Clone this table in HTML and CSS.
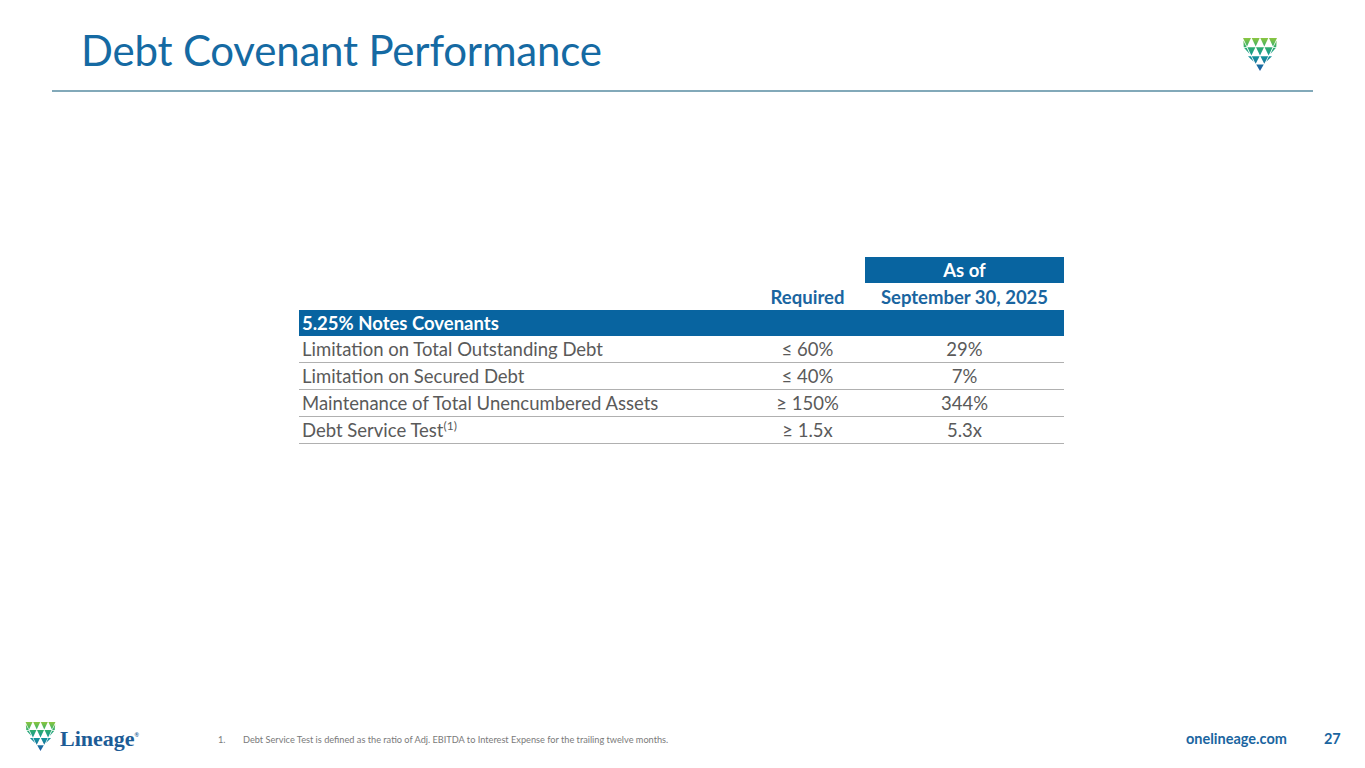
FILE: index.html
```html
<!DOCTYPE html>
<html lang="en">
<head>
<meta charset="utf-8">
<title>Debt Covenant Performance</title>
<link rel="stylesheet" href="styles.css">
</head>
<body>
<div class="page">
  <header class="header">
    <h1 class="title">Debt Covenant Performance</h1>
    <svg class="logo-top" width="34" height="33" viewBox="0 0 34 33" aria-hidden="true">
      <defs>
        <linearGradient id="lg1" gradientUnits="userSpaceOnUse" x1="0" y1="0" x2="0" y2="33">
          <stop offset="0" stop-color="#8cc63f"/>
          <stop offset="0.28" stop-color="#2fae6e"/>
          <stop offset="0.55" stop-color="#12939a"/>
          <stop offset="1" stop-color="#1f58a5"/>
        </linearGradient>
      </defs>
      <g fill="url(#lg1)">
        <polygon points="0,0 8,0 4,8.5"/>
        <polygon points="8.7,0 16.7,0 12.7,8.5"/>
        <polygon points="17.3,0 25.3,0 21.3,8.5"/>
        <polygon points="26,0 34,0 30,8.5"/>
        <polygon points="0.3,2.5 3.7,9.2 0.8,9.2"/>
        <polygon points="33.7,2.5 30.3,9.2 33.2,9.2"/>
        <polygon points="4.4,9.2 12.4,9.2 8.4,17.5"/>
        <polygon points="13,9.2 21,9.2 17,17.5"/>
        <polygon points="21.6,9.2 29.6,9.2 25.6,17.5"/>
        <polygon points="1.2,10 3.8,10 6.6,16"/>
        <polygon points="32.8,10 30.2,10 27.4,16"/>
        <polygon points="8.8,18.2 16.6,18.2 12.7,25.8"/>
        <polygon points="17.4,18.2 25.2,18.2 21.3,25.8"/>
        <polygon points="5,18.2 8,18.2 10.7,23.8"/>
        <polygon points="29,18.2 26,18.2 23.3,23.8"/>
        <polygon points="13.2,26.5 20.8,26.5 17,33"/>
      </g>
    </svg>
  </header>
  <div class="rule"></div>
  <main class="main">
    <table class="cov">
      <colgroup>
        <col class="c1"><col class="c2"><col class="c3">
      </colgroup>
      <tr class="r-asof">
        <td></td><td></td><td class="asof">As of</td>
      </tr>
      <tr class="r-head">
        <td></td><td class="hd">Required</td><td class="hd">September 30, 2025</td>
      </tr>
      <tr class="r-band">
        <td colspan="3">5.25% Notes Covenants</td>
      </tr>
      <tr class="r-data">
        <td>Limitation on Total Outstanding Debt</td><td>≤ 60%</td><td>29%</td>
      </tr>
      <tr class="r-data">
        <td>Limitation on Secured Debt</td><td>≤ 40%</td><td>7%</td>
      </tr>
      <tr class="r-data">
        <td>Maintenance of Total Unencumbered Assets</td><td>≥ 150%</td><td>344%</td>
      </tr>
      <tr class="r-data">
        <td>Debt Service Test<sup>(1)</sup></td><td>≥ 1.5x</td><td>5.3x</td>
      </tr>
    </table>
  </main>
  <footer class="footer">
    <div class="brand">
      <svg class="logo-foot" width="35" height="29" viewBox="0 0 34 33" aria-hidden="true">
        <defs>
          <linearGradient id="lg2" gradientUnits="userSpaceOnUse" x1="0" y1="0" x2="0" y2="33">
            <stop offset="0" stop-color="#8cc63f"/>
            <stop offset="0.28" stop-color="#2fae6e"/>
            <stop offset="0.55" stop-color="#12939a"/>
            <stop offset="1" stop-color="#1f58a5"/>
          </linearGradient>
        </defs>
        <g fill="url(#lg2)">
          <polygon points="0,0 8,0 4,8.5"/>
          <polygon points="8.7,0 16.7,0 12.7,8.5"/>
          <polygon points="17.3,0 25.3,0 21.3,8.5"/>
          <polygon points="26,0 34,0 30,8.5"/>
          <polygon points="0.3,2.5 3.7,9.2 0.8,9.2"/>
          <polygon points="33.7,2.5 30.3,9.2 33.2,9.2"/>
          <polygon points="4.4,9.2 12.4,9.2 8.4,17.5"/>
          <polygon points="13,9.2 21,9.2 17,17.5"/>
          <polygon points="21.6,9.2 29.6,9.2 25.6,17.5"/>
          <polygon points="1.2,10 3.8,10 6.6,16"/>
          <polygon points="32.8,10 30.2,10 27.4,16"/>
          <polygon points="8.8,18.2 16.6,18.2 12.7,25.8"/>
          <polygon points="17.4,18.2 25.2,18.2 21.3,25.8"/>
          <polygon points="5,18.2 8,18.2 10.7,23.8"/>
          <polygon points="29,18.2 26,18.2 23.3,23.8"/>
          <polygon points="13.2,26.5 20.8,26.5 17,33"/>
        </g>
      </svg>
      <span class="wordmark">Lineage<span class="reg">®</span></span>
    </div>
    <p class="note"><span class="num">1.</span>Debt Service Test is defined as the ratio of Adj. EBITDA to Interest Expense for the trailing twelve months.</p>
    <span class="site">onelineage.com</span>
    <span class="pg">27</span>
  </footer>
</div>
</body>
</html>
```
FILE: styles.css
```css
html, body {
  margin: 0;
  padding: 0;
  background: #ffffff;
}
body {
  font-family: "Lato", "Open Sans", "Liberation Sans", sans-serif;
}
.page {
  width: 1365px;
  height: 768px;
  display: flex;
  flex-direction: column;
  overflow: hidden;
}
.header {
  height: 90px;
  display: flex;
  justify-content: space-between;
  align-items: flex-start;
  padding: 0 88px 0 81px;
  box-sizing: border-box;
}
.title {
  margin: 26px 0 0 0;
  font-weight: 400;
  font-size: 42px;
  line-height: 48px;
  color: #156aa3;
  letter-spacing: -0.2px;
}
.logo-top {
  margin-top: 38px;
}
.rule {
  margin: 0 52px;
  height: 2px;
  background: #82a9b9;
}
.main {
  flex: 1;
  padding: 165px 0 0 299px;
}
.cov {
  border-collapse: collapse;
  width: 765px;
  font-size: 18.5px;
  color: #5a5a5a;
}
.c1 { width: 451px; }
.c2 { width: 115px; }
.c3 { width: 199px; }
.cov td {
  padding: 0;
  height: 26px;
  line-height: 26px;
  text-align: center;
}
.cov td:first-child {
  text-align: left;
  padding-left: 3px;
}
.asof {
  background: #0864a0;
  color: #ffffff;
  font-weight: 700;
}
.r-head td {
  height: 27px;
  color: #1a65a0;
  font-weight: 700;
}
.r-band td {
  background: #0864a0;
  color: #ffffff;
  font-weight: 700;
  text-align: left;
}
.r-data td {
  border-bottom: 1px solid #b0b0b0;
  height: 25px;
}
.cov sup {
  font-size: 12px;
  line-height: 0;
  vertical-align: 7px;
}
.footer {
  height: 54px;
  display: flex;
  align-items: flex-start;
  padding: 7px 0 0 23px;
  box-sizing: border-box;
}
.brand {
  display: flex;
  align-items: center;
  width: 195px;
}
.logo-foot {
  display: block;
}
.wordmark {
  margin-left: 2px;
  font-family: "Liberation Serif", "DejaVu Serif", serif;
  font-weight: 700;
  font-size: 22px;
  color: #1d5c96;
  margin-top: 5px;
}
.reg {
  font-size: 6px;
  vertical-align: 9px;
  font-family: "Liberation Sans", sans-serif;
}
.note {
  margin: 13px 0 0 0;
  font-size: 9.2px;
  color: #7a7a7a;
  width: 968px;
}
.num {
  display: inline-block;
  width: 25px;
}
.site {
  margin-top: 9px;
  font-weight: 700;
  font-size: 14.5px;
  color: #1a65a0;
}
.pg {
  margin: 9px 0 0 37px;
  font-weight: 700;
  font-size: 14.5px;
  color: #1a65a0;
}
```
